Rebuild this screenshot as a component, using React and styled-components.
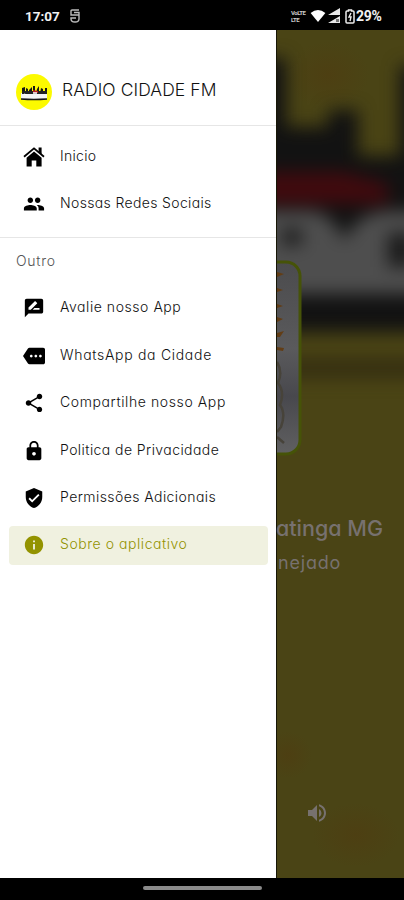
import React from 'react';
import styled, {createGlobalStyle} from "styled-components";
import {
    MdInfo, MdLock, MdMore, MdPeople, MdRateReview, MdShare, MdVerifiedUser, MdVolumeUp
} from "react-icons/md";

const GlobalStyle = createGlobalStyle`
    * {
        box-sizing: border-box;
    }
    body {
        margin: 0;
        background: #000;
        font-family: Inter, "Open Sans", sans-serif;
        font-feature-settings: "cv11";
    }
`

const Screen = styled.div`
    width: 404px;
    height: 900px;
    display: grid;
    grid-template-rows: 30px 1fr 22px;
    overflow: hidden;
    background: #000;
`

const StatusBar = styled.header`
    display: flex;
    align-items: center;
    padding: 2px 22px 0 25px;
    color: #f2f2f2;
    font: 700 13.5px/16px Roboto, sans-serif;
    svg {
        display: block;
        flex: none;
    }
`

const Clock = styled.span`
    width: 45px;
`

const StatusIcons = styled.div`
    display: flex;
    align-items: center;
    margin-left: auto;
`

const Volte = styled.div`
    display: grid;
    grid-template-rows: 7px 7px;
    width: 19px;
    font-size: 6px;
    line-height: 7px;
    letter-spacing: -0.5px;
    color: #ccc;
`

const Battery = styled.div`
    display: flex;
    align-items: center;
    gap: 1px;
    width: 38px;
    margin-left: 3px;
    font-size: 14px;
    letter-spacing: -0.3px;
    white-space: nowrap;
`

const Body = styled.div`
    display: flex;
    min-height: 0;
`

const Drawer = styled.aside`
    flex: 0 0 276px;
    background: #fff;
`

const Brand = styled.div`
    height: 96px;
    display: flex;
    align-items: center;
    padding: 28px 0 0 16px;
    border-bottom: 1px solid #e6e6e6;
    svg {
        flex: none;
    }
`

const BrandName = styled.h1`
    margin: -4px 0 0 10px;
    font-size: 17.5px;
    font-weight: 300;
    line-height: 24px;
    letter-spacing: 0.07px;
    white-space: nowrap;
    color: #111;
`

const Menu = styled.nav`
    display: grid;
    grid-auto-rows: 39px;
    row-gap: 8.4px;
    padding: ${ p => p.$first ? '12px 8px 13px 9px' : '18px 8px 0 9px'};
    border-bottom: ${ p => p.$first ? '1px solid #e6e6e6' : 'none'};
`

const MenuItem = styled.a`
    display: flex;
    align-items: center;
    padding-left: 14px;
    border-radius: 4px;
    color: ${ p => p.$active ? '#939300' : '#111'};
    background: ${ p => p.$active ? '#f0f1e0' : 'transparent'};
    svg {
        flex: none;
        width: 22px;
        height: 22px;
        margin-top: -1px;
        color: ${ p => p.$active ? '#939300' : '#000'};
    }
`

const Label = styled.span`
    margin: -3px 0 0 15px;
    font-size: 14px;
    font-weight: 300;
    line-height: 20px;
    letter-spacing: ${ p => p.$spacing}px;
    white-space: nowrap;
`

const SectionTitle = styled.h2`
    margin: 13px 0 0 16px;
    font-size: 14px;
    font-weight: 300;
    line-height: 20px;
    letter-spacing: 0.7px;
    color: #555;
`

const Player = styled.main`
    position: relative;
    flex: 1;
    overflow: hidden;
    background: #4a4415;
`

const Backdrop = styled.svg`
    position: absolute;
    inset: 0;
    display: block;
`

const Track = styled.div`
    position: relative;
    height: 100%;
    display: flex;
    flex-direction: column;
    padding-top: 483px;
    color: #77716f;
    white-space: nowrap;
    svg {
        display: block;
        margin: auto 0 53px 29px;
    }
`

const Station = styled.div`
    align-self: flex-end;
    margin-right: 22px;
    font-size: 21.5px;
    font-weight: 500;
    line-height: 30px;
`

const Song = styled.div`
    margin: 8px 0 0 2px;
    font-size: 18px;
    line-height: 24px;
    letter-spacing: 0.8px;
`

const GestureBar = styled.footer`
    display: flex;
    justify-content: center;
    padding-top: 8px;
    i {
        width: 119px;
        height: 4px;
        border-radius: 2px;
        background: #8b8b8b;
    }
`

const HomeIcon = () => (
    <svg viewBox="0 0 22 22" fill="currentColor">
        <path d="M1 10.8L11 2.4l10 8.4" fill="none" stroke="currentColor" strokeWidth="1.8" />
        <path d="M15.6 1.6h3v7l-3-2.6z" />
        <path d="M11 5.4l7.6 6.4V20.6h-5.3v-6H8.7v6H3.6v-8.8z" />
    </svg>
)

const mainItems = [
    {icon: HomeIcon, text: "Inicio", spacing: 0.3},
    {icon: MdPeople, text: "Nossas Redes Sociais", spacing: 0.35},
]

const otherItems = [
    {icon: MdRateReview, text: "Avalie nosso App", spacing: 0.55},
    {icon: MdMore, text: "WhatsApp da Cidade", spacing: 0.7},
    {icon: MdShare, text: "Compartilhe nosso App", spacing: 0.6},
    {icon: MdLock, text: "Politica de Privacidade", spacing: 0.43},
    {icon: MdVerifiedUser, text: "Permissões Adicionais", spacing: 0.43},
    {icon: MdInfo, text: "Sobre o aplicativo", spacing: 0.55, active: true},
]

const MenuList = ({items, first}) => (
    <Menu $first={first}>
        {items.map(({icon: Icon, text, spacing, active}) => (
            <MenuItem key={text} $active={active}>
                <Icon />
                <Label $spacing={spacing}>{text}</Label>
            </MenuItem>
        ))}
    </Menu>
)

const Logo = () => (
    <svg width="36" height="36" viewBox="0 0 36 36">
        <circle cx="18" cy="18" r="18" fill="#fcfa00" />
        <path d="M5 19h26v6q-13 1-26 0z" fill="#f4f4f4" />
        <path d="M6 14l3-1v7h-3zM10 14l2 1v5h-2zM13 16l3-3v7h-3zM17 12h2v7h-2zM21 15l2-3v8h-3zM25 14l2 1v5h-3zM29 14h2v6h-2z" fill="#171717" />
        <path d="M6 17h25v3H6z" fill="#222" />
        <path d="M17 16l5 1v2h-5z" fill="#b52020" />
        <path d="M5 25q13 1 26 0" fill="none" stroke="#171717" strokeWidth="1.4" />
        <path d="M8 20l3 1M17 19h4" stroke="#fff" strokeWidth="1.3" />
    </svg>
)

const WifiIcon = () => (
    <svg width="16" height="14" viewBox="0 0 16 14" fill="#fff">
        <path d="M.6 4Q8-2.2 15.4 4L8 13z" />
    </svg>
)

// two stacked signal meters, one for each SIM
const SignalIcon = () => (
    <svg width="16" height="16" viewBox="0 0 16 16" fill="#e8e8e8">
        <path d="M14 0v7H2zM14 8v7H2z" />
        <path d="M10 11h3v3h-3z" fill="#777" />
    </svg>
)

const BatteryIcon = () => (
    <svg width="10" height="15" viewBox="0 0 10 15" fill="none" stroke="#eee">
        <path d="M3.5 1h3v1H8q1 0 1 1v10q0 1-1 1H2q-1 0-1-1V3q0-1 1-1h1.5z" strokeWidth="1.5" />
        <path d="M6 4L4 8h2l-1 4" strokeWidth="1.4" />
    </svg>
)

// drawn in page coordinates, starting at the drawer's right edge
const Artwork = () => (
    <Backdrop width="128" height="848" viewBox="276 30 128 848">
        <defs>
            <filter id="soft" x="-50%" y="-50%" width="200%" height="200%" colorInterpolationFilters="sRGB">
                <feGaussianBlur stdDeviation="8.5" />
            </filter>
            <radialGradient id="patch">
                <stop offset="0" stopColor="#4d3f12" />
                <stop offset="1" stopColor="#4d3f12" stopOpacity="0" />
            </radialGradient>
            <linearGradient id="cover" x1="0" y1="0" x2="0" y2="1">
                <stop offset="0" stopColor="#4b4b4d" />
                <stop offset="0.45" stopColor="#5a5a5c" />
                <stop offset="0.7" stopColor="#48484d" />
                <stop offset="1" stopColor="#606061" />
            </linearGradient>
        </defs>
        <rect x="276" y="30" width="128" height="848" fill="#4a4415" />
        <g fill="url(#patch)">
            <ellipse cx="328" cy="75" rx="42" ry="34" />
            <ellipse cx="356" cy="835" rx="44" ry="32" />
            <ellipse cx="288" cy="755" rx="24" ry="24" />
        </g>
        <g filter="url(#soft)">
            <path d="M240 58h46v69h42v-17h30v46h42V66h50v266H240z" fill="#121212" />
            <path d="M240 172h104l44 12v20H240z" fill="#400a0e" />
            <path d="M240 211h75q22 8 29 30 13-28 42-30h60v83H240z" fill="#4e4e4e" />
            <path d="M282 229h20v16h-20zM388 233h25v34h-25z" fill="#1a1a1a" />
            <rect x="280" y="358" width="170" height="20" fill="#352f11" />
        </g>
        <rect x="240" y="262" width="60" height="192" rx="14" fill="url(#cover)" stroke="#465308" strokeWidth="3" />
        <path d="M277 272l7 2-7 3zM277 288l6 2-6 2zM277 304l6 2-6 2zM277 317l6 2-6 3zM277 333l7-2-4 6h-3zM277 347l7 1-1 3-6-1z" fill="#623d15" />
        <path d="M277 362q6 10 1 21 7 9 2 22 6 8 1 22l-4 5M277 437l7 6" fill="none" stroke="#47433a" strokeWidth="2.5" />
        <path d="M276.5 30v848" stroke="#171606" />
    </Backdrop>
)

const App = () => {
    return (
        <>
            <GlobalStyle />
            <Screen>
                <StatusBar>
                    <Clock>17:07</Clock>
                    <svg width="10" height="14" viewBox="0 0 10 14" fill="none" stroke="#bbb" strokeWidth="1.4">
                        <path d="M9 1H2q-1 0-1 1v4h8M4 3.5h5V10q0 3-4 3t-4-3V9h5" />
                    </svg>
                    <StatusIcons>
                        <Volte>
                            <span>VoLTE</span>
                            <span>LTE</span>
                        </Volte>
                        <WifiIcon />
                        <SignalIcon />
                        <Battery><BatteryIcon />29%</Battery>
                    </StatusIcons>
                </StatusBar>
                <Body>
                    <Drawer>
                        <Brand>
                            <Logo />
                            <BrandName>RADIO CIDADE FM</BrandName>
                        </Brand>
                        <MenuList items={mainItems} first />
                        <SectionTitle>Outro</SectionTitle>
                        <MenuList items={otherItems} />
                    </Drawer>
                    <Player>
                        <Artwork />
                        <Track>
                            <Station>atinga MG</Station>
                            <Song>nejado</Song>
                            <MdVolumeUp size={24} />
                        </Track>
                    </Player>
                </Body>
                <GestureBar><i /></GestureBar>
            </Screen>
        </>
    )
}

export default App
